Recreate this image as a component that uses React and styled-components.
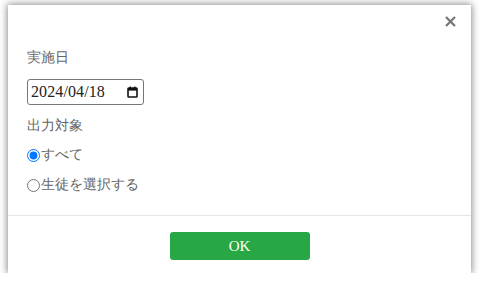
import React, { useState } from 'react';
import styled, { createGlobalStyle } from 'styled-components';

const GlobalStyle = createGlobalStyle`
	html, body {
		margin: 0;
		padding: 0;
		background: #fff;
		font-family: "Liberation Serif", serif;
	}
`;

function CalendarIcon() {
	return (
		<svg width="11" height="12" viewBox="0 0 11 12">
			<rect x="1" y="2" width="9" height="9" fill="none" stroke="#111" strokeWidth="1.6" rx="0.8" />
			<rect x="1" y="2" width="9" height="2.6" fill="#111" />
			<rect x="2.6" y="0.5" width="1.3" height="2" fill="#111" />
			<rect x="7.1" y="0.5" width="1.3" height="2" fill="#111" />
		</svg>
	);
}

function App() {
	const [target, setTarget] = useState('all');

	return (
		<Page>
			<GlobalStyle />
			<Dialog>
				<Header>
					<CloseButton aria-label="close">
						<svg width="11" height="11" viewBox="0 0 11 11">
							<path d="M1 1L10 10M10 1L1 10" stroke="#757575" strokeWidth="2.2" strokeLinecap="butt" />
						</svg>
					</CloseButton>
				</Header>
				<Body>
					<Label>実施日</Label>
					<DateField>
						<DateText>2024/04/18</DateText>
						<CalendarIcon />
					</DateField>
					<Label>出力対象</Label>
					<RadioRow>
						<Radio type="radio" name="target" checked={target === 'all'} onChange={() => setTarget('all')} />
						すべて
					</RadioRow>
					<RadioRow>
						<Radio type="radio" name="target" checked={target === 'select'} onChange={() => setTarget('select')} />
						生徒を選択する
					</RadioRow>
				</Body>
				<Footer>
					<OkButton>OK</OkButton>
				</Footer>
			</Dialog>
		</Page>
	);
}

export default App;

// Styles
const Page = styled.div`
	padding: 5px 9px 0 8px;
`;
const Dialog = styled.div`
	width: 463px;
	height: 268px;
	box-sizing: border-box;
	background: #fff;
	box-shadow: 0 0 7px 1px rgba(0, 0, 0, .45);
	display: flex;
	flex-direction: column;
`;
const Header = styled.div`
	height: 36px;
	display: flex;
	justify-content: flex-end;
	align-items: center;
	padding: 0 15px 4px 0;
	box-sizing: border-box;
`;
const CloseButton = styled.button`
	border: 0;
	background: none;
	padding: 0;
	width: 11px;
	height: 11px;
	display: flex;
	cursor: pointer;
`;
const Body = styled.div`
	display: flex;
	flex-direction: column;
	align-items: flex-start;
	padding: 7px 19px 20px;
	border-bottom: 1px solid #e3e6e8;
`;
const Label = styled.div`
	font-size: 14px;
	line-height: 20px;
	color: #666;
	margin-bottom: 11px;
`;
const DateField = styled.div`
	width: 117px;
	height: 26px;
	box-sizing: border-box;
	display: flex;
	align-items: center;
	justify-content: space-between;
	border: 1px solid #767676;
	border-radius: 3px;
	padding: 0 5px 0 3px;
	margin: 0 0 11px;
`;
const DateText = styled.span`
	font-family: "Liberation Serif", serif;
	font-size: 16px;
	color: #222;
	letter-spacing: 0.1px;
`;
const RadioRow = styled.label`
	display: flex;
	align-items: center;
	font-size: 14px;
	line-height: 20px;
	color: #666;
	& + & {
		margin-top: 10px;
	}
	&:first-of-type {
		margin-top: -2px;
	}
`;
const Radio = styled.input`
	margin: 0 1px 0 0;
	width: 13px;
	height: 13px;
`;
const Footer = styled.div`
	display: flex;
	justify-content: center;
	padding: 16px 0 13px;
`;
const OkButton = styled.button`
	width: 140px;
	height: 28px;
	border: 0;
	border-radius: 3px;
	background: #28a745;
	color: #fff;
	font-family: "Liberation Serif", serif;
	font-size: 15px;
	font-weight: 400;
	cursor: pointer;
`;
